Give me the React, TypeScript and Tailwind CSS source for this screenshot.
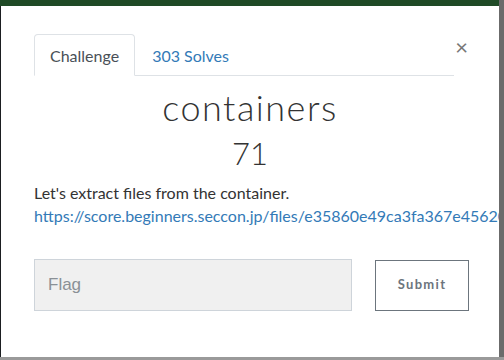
export default function App() {
  return (
    <div className="relative h-[360px] w-[504px] overflow-hidden bg-[#1b1e21]" style={{ fontFamily: 'Lato, "Noto Sans", sans-serif' }}>
      {/* backdrop strips */}
      <div className="absolute inset-x-0 top-0 h-[6px] bg-[#1f4a26]" />
      <div className="absolute right-0 top-0 h-full w-[5px] bg-[#6b6b6b]" />
      <div className="absolute inset-x-0 bottom-0 h-[3px] bg-[#9a9a9a]" />

      {/* MODAL */}
      <div className="absolute left-[1px] top-[6px] h-[351px] w-[498px] overflow-hidden bg-white">
        <div className="relative px-[33px] pt-[28px]">
          {/* TABS */}
          <div className="flex w-[420px] border-b border-[#dee2e6]">
            <div className="-mb-px rounded-t-[4px] border border-b-white border-[#dee2e6] px-[15px] pb-[10px] pt-[11px] text-[16px] leading-[19px] text-[#495057]">
              Challenge
            </div>
            <div className="px-[17px] pb-[10px] pt-[12px] text-[16px] leading-[19px] text-[#337ab7]">303 Solves</div>
          </div>

          <button className="absolute right-[31px] top-[30px] text-[22px] leading-none text-[#777]">×</button>

          {/* TITLE */}
          <h2 className="mt-[9px] text-center text-[36px] font-light leading-[44px] tracking-[1.5px] text-[#333]">containers</h2>
          <h3 className="mt-[5px] text-center text-[31px] font-light leading-[38px] text-[#333]">71</h3>

          {/* DESCRIPTION */}
          <p className="mt-[9px] text-[16px] leading-[23px] text-[#333]">Let's extract files from the container.</p>
          <a className="block whitespace-nowrap text-[16px] leading-[23px] text-[#337ab7]">
            https://score.beginners.seccon.jp/files/e35860e49ca3fa367e456207ebc427ff_containers
          </a>

          {/* FORM */}
          <div className="mt-[32px] flex items-center">
            <div className="flex h-[52px] w-[318px] shrink-0 items-center border border-[#ced4da] bg-[#f0f0f0] px-[13px] text-[17px] text-[#8a9096]" style={{ fontFamily: '"Liberation Sans", Arial, sans-serif' }}>
              Flag
            </div>
            <button className="ml-[23px] h-[51px] w-[94px] shrink-0 border border-[#6c757d] bg-white text-[13px] font-bold tracking-[1.3px] text-[#6c757d]">
              Submit
            </button>
          </div>
        </div>
      </div>
    </div>
  );
}
